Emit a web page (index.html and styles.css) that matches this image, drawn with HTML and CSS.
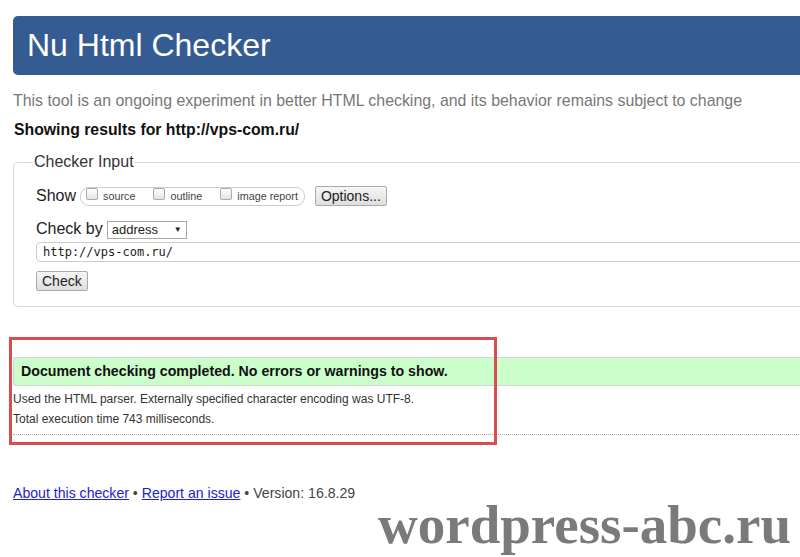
FILE: index.html
```html
<!DOCTYPE html>
<html lang="en">
<head>
    <meta charset="UTF-8">
    <title>Nu Html Checker</title>
    <link rel="stylesheet" href="styles.css">
</head>
<body>
    <div class="page">
        <h1>Nu Html Checker</h1>
        <p class="intro">This tool is an ongoing experiment in better HTML checking, and its behavior remains subject to change</p>
        <p class="showing">Showing results for http://vps-com.ru/</p>

        <fieldset class="checker">
            <legend>Checker Input</legend>
            <div class="row">
                <span class="label">Show</span>
                <span class="opts">
                    <label><span class="box"></span>source</label>
                    <label><span class="box"></span>outline</label>
                    <label><span class="box"></span>image report</label>
                </span>
                <button type="button" class="btn">Options...</button>
            </div>
            <div class="row second">
                <span class="label">Check by</span>
                <span class="select">address <span class="arrow">▼</span></span>
            </div>
            <div class="doc">http://vps-com.ru/</div>
            <button type="button" class="btn check">Check</button>
        </fieldset>

        <div class="results">
            <p class="success">Document checking completed. No errors or warnings to show.</p>
            <p class="details">Used the HTML parser. Externally specified character encoding was UTF-8.</p>
            <p class="details">Total execution time 743 milliseconds.</p>
            <div class="highlight"></div>
        </div>

        <p class="footer"><a href="#">About this checker</a> • <a href="#">Report an issue</a> • Version: 16.8.29</p>
    </div>
    <div class="watermark">wordpress-abc.ru</div>
</body>
</html>
```

FILE: styles.css
```css
html, body {
    margin: 0;
    overflow: hidden;
    background: #fff;
}
body {
    font-family: 'Liberation Sans', Arial, sans-serif;
    color: #222;
    position: relative;
    height: 557px;
}
.page {
    width: 900px;
    padding: 16px 0 0 13px;
}
h1 {
    margin: 0;
    height: 59px;
    line-height: 59px;
    padding-left: 14px;
    background-color: #355b93;
    color: #fff;
    font-size: 32px;
    font-weight: normal;
    border-radius: 5px 0 0 5px;
}
.intro {
    margin: 16px 0 0 0;
    font-size: 15.9px;
    line-height: 20px;
    color: #777;
}
.showing {
    margin: 9px 0 0 1px;
    font-size: 15.8px;
    line-height: 20px;
    font-weight: bold;
    color: #111;
}
.checker {
    margin: 13px 0 0 0;
    padding: 14px 0 15px 22px;
    border: 1px solid #d9d9d9;
    border-radius: 4px;
}
.checker legend {
    font-size: 16px;
    padding: 0 1px;
    margin-left: -3px;
    color: #333;
}
.row {
    display: flex;
    align-items: center;
    height: 22px;
    margin-bottom: 11px;
}
.label {
    font-size: 16px;
    color: #222;
    margin-right: 4px;
}
.opts {
    display: flex;
    align-items: center;
    height: 17px;
    padding: 0 6px 0 5px;
    border: 1px solid #ccc;
    border-radius: 9px;
    font-size: 10.8px;
    color: #444;
    white-space: nowrap;
    margin-right: 10px;
}
.opts label {
    display: flex;
    align-items: center;
    margin-right: 18px;
}
.opts label:last-child {
    margin-right: 0;
}
.box {
    display: inline-block;
    width: 10px;
    height: 10px;
    margin-right: 5px;
    margin-top: -5px;
    border: 1px solid #aaa;
    border-radius: 2px;
    background: linear-gradient(#fff, #e4e4e4);
}
.btn {
    font-family: 'Liberation Sans', Arial, sans-serif;
    font-size: 14px;
    color: #222;
    padding: 0 5px;
    height: 20px;
    border: 1px solid #aaa;
    border-radius: 2px;
    background: linear-gradient(#f6f6f6, #dedede);
}
.select {
    display: inline-flex;
    align-items: center;
    justify-content: space-between;
    width: 70px;
    height: 16px;
    padding: 0 4px;
    border: 1px solid #aaa;
    font-size: 13px;
    color: #222;
    margin-top: 1px;
}
.arrow {
    font-size: 8px;
}
.doc {
    margin-top: -9px;
    height: 18px;
    line-height: 18px;
    padding-left: 6px;
    border: 1px solid #ccc;
    border-radius: 4px;
    font-family: 'DejaVu Sans Mono', monospace;
    font-size: 12px;
    color: #222;
}
.check {
    margin-top: 9px;
    padding: 0 5px;
}
.results {
    position: relative;
    margin-top: 50px;
}
.success {
    margin: 0;
    height: 27px;
    line-height: 27px;
    padding-left: 7px;
    background: #ccfecc;
    border: 1px solid #d4d4d4;
    border-right: none;
    border-radius: 3px 0 0 3px;
    font-size: 14.2px;
    font-weight: bold;
    color: #111;
}
.details {
    margin: 0;
    font-size: 12px;
    line-height: 20px;
    color: #333;
}
.results .success + .details {
    margin-top: 3px;
}
.results::after {
    content: '';
    display: block;
    margin-top: 5px;
    border-top: 1px dotted #aaa;
}
.highlight {
    position: absolute;
    left: -4px;
    top: -20px;
    width: 482px;
    height: 102px;
    border: 3px solid #d84e4e;
}
.footer {
    margin: 50px 0 0 0;
    font-size: 14.1px;
    color: #444;
}
.footer a {
    color: #2222cc;
}
.watermark {
    position: absolute;
    left: 378px;
    top: 497px;
    font-family: 'Liberation Serif', 'DejaVu Serif', serif;
    font-weight: bold;
    font-size: 55px;
    line-height: 1;
    color: #7a7a7a;
}
```
